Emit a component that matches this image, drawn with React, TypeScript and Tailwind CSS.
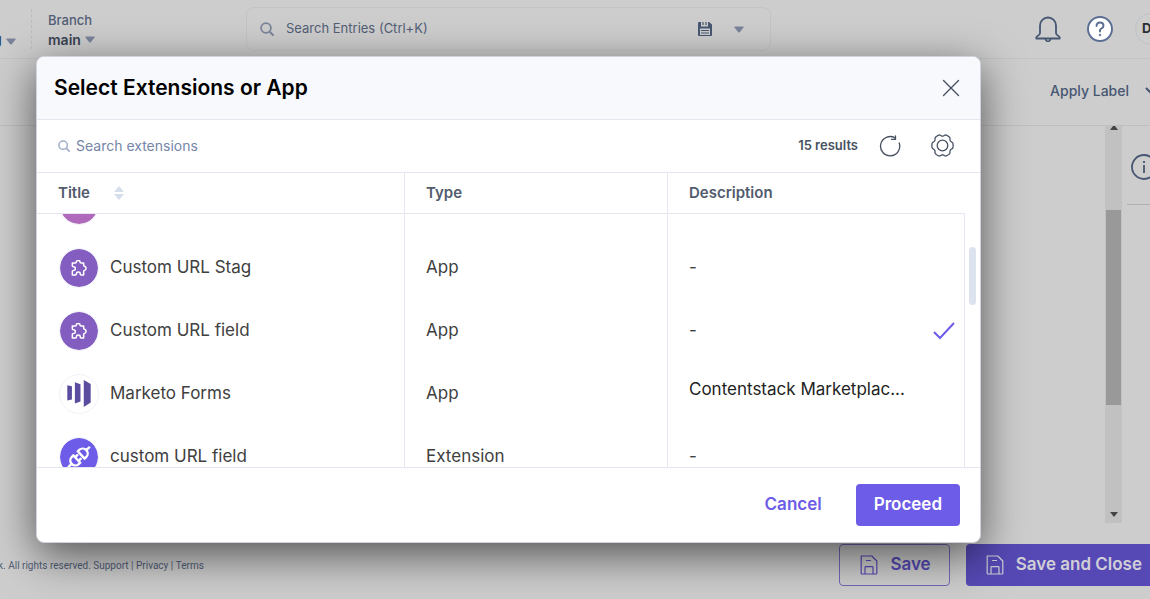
import { useLayoutEffect, useRef } from "react";
import type { ReactNode } from "react";

function Caret({ className = "" }: { className?: string }) {
  return (
    <svg viewBox="0 0 10 7" className={`h-[7px] w-[10px] shrink-0 ${className}`} aria-hidden="true">
      <path d="M1 .5h8q1 0 .5 .9L6 6Q5 7 4 6L.5 1.4Q0 .5 1 .5z" fill="currentColor" />
    </svg>
  );
}

function SearchIcon({ className = "" }: { className?: string }) {
  return (
    <svg viewBox="0 0 14 14" className={`shrink-0 ${className}`} fill="none" stroke="currentColor" aria-hidden="true">
      <circle cx="6" cy="6" r="4.9" strokeWidth="1.8" />
      <path d="M9.6 9.6 13 13" strokeWidth="2" strokeLinecap="round" />
    </svg>
  );
}

function FloppyIcon() {
  return (
    <svg viewBox="0 0 18 20" className="h-5 w-[18px] shrink-0" fill="none" stroke="currentColor" strokeWidth="1.2" strokeLinejoin="round" aria-hidden="true">
      <path d="M1.2 1h10.6l5 5v12.2q0 .8-.8.8H2q-.8 0-.8-.8z" />
      <path d="M5 19v-6.5q0-.8.8-.8h6.400q.8 0 .8.8V19" />
      <path d="M6.500 5.500h4" strokeLinecap="round" />
    </svg>
  );
}

function PuzzleIcon() {
  return (
    <svg viewBox="0 0 51 48" className="h-4 w-[17px]" fill="none" stroke="#fff" strokeWidth="4.500" strokeLinejoin="round" aria-hidden="true">
      <path d="M4 9h9q3 0 3-3.500a5.500 4 0 0 1 11 0Q27 9 30 9h8v7q0 3 4 3.500a5.500 6 0 0 1 0 11q-4 .5-4 3.500v11h-8q-2 0-2.500-4a5.500 5 0 0 0-11 0Q16 45 14 45H4V34q0-2 3.500-2.500a5.500 5.500 0 0 0 0-11Q4 20 4 17z" />
    </svg>
  );
}

function MarketoIcon() {
  return (
    <svg viewBox="0 0 71 82" className="h-[27px] w-6" fill="#5c4c9f" aria-hidden="true">
      <path d="M0 16l14 3v40l-14 3zM23 7l17 6v52l-17 6zM50 0l21 12v56L50 82z" />
    </svg>
  );
}

function PlugIcon() {
  return (
    <svg viewBox="-14 -14 28 28" className="h-7 w-7" fill="none" stroke="#fff" strokeWidth="2.400" strokeLinecap="round" strokeLinejoin="round" aria-hidden="true">
      <g transform="rotate(-43)">
        <path d="M-14 0h4M-3-5v10h-2a5 5 0 0 1 0-10zM-3-2.500h3M-3 2.500h3M3-5v10h2a5 5 0 0 0 0-10zM10 0h4" />
      </g>
    </svg>
  );
}

const gearOutline =
  Array.from({ length: 120 }, (_, i) => {
    const angle = (i / 120) * Math.PI * 2;
    const wave = Math.max(-1, Math.min(0.6, 0.5 + 1.5 * Math.cos(6 * angle)));
    const r = 10 + wave;
    return `${i ? "L" : "M"}${(r * Math.cos(angle)).toFixed(2)} ${(r * 1.04 * Math.sin(angle)).toFixed(2)}`;
  }).join("") + "z";

type Row = { title: string; type: string; description: string; icon: ReactNode; color: string; selected?: boolean; clamp?: boolean };

const rows: Row[] = [
  { title: "", type: "", description: "", icon: null, color: "bg-[#b06abb]" },
  { title: "Custom URL Stag", type: "App", description: "-", icon: <PuzzleIcon />, color: "bg-[#845dc1]" },
  { title: "Custom URL field", type: "App", description: "-", icon: <PuzzleIcon />, color: "bg-[#845dc1]", selected: true },
  { title: "Marketo Forms", type: "App", description: "Contentstack Marketplac...", icon: <MarketoIcon />, color: "bg-white", clamp: true },
  { title: "custom URL field", type: "Extension", description: "-", icon: <PlugIcon />, color: "bg-[#6c5ce7]" },
];

function TopBar() {
  return (
    <header className="flex h-[59px] shrink-0 items-center border-b border-[#c3c3c6]">
      <button className="-ml-[7px] flex h-10 w-[39px] items-end gap-1 border-r border-dashed border-[#bcbcc0] text-sm leading-5 font-semibold text-[#33475f]">
        g<Caret className="mb-1 text-[#7a849b]" />
      </button>
      <button className="ml-4 flex w-[198px] flex-col items-start pt-px text-left">
        <span className="text-[13px] leading-5 font-medium text-[#525e76]">Branch</span>
        <span className="flex items-center gap-1 text-sm leading-5 font-semibold text-[#3b4454]">
          main <Caret className="text-[#7a849b]" />
        </span>
      </button>
      <div className="flex h-[44px] w-[525px] items-center rounded-lg border border-[#c4c4c8] pr-[26px] pl-[13px]">
        <SearchIcon className="h-[14px] w-[14px] text-[#7a849b]" />
        <input
          aria-label="Search Entries"
          placeholder="Search Entries (Ctrl+K)"
          className="ml-3 min-w-0 flex-1 bg-transparent text-[13px] text-[#525e76] outline-none placeholder:text-[#525e76]"
        />
        <button aria-label="Saved searches" className="mr-[22px] text-[#475672]">
          <svg viewBox="0 0 14 14" className="h-[14px] w-[14px]" aria-hidden="true">
            <path fillRule="evenodd" fill="currentColor" d="M1 0h2v4.500h7V0h1l3 2.500V13q0 1-1 1H1q-1 0-1-1V1q0-1 1-1zM2 6.500V13h10V6.500z" />
            <path d="M5 0v3M8 0v3M3 8.500h8M3 11h8" stroke="currentColor" strokeWidth="1.200" />
          </svg>
        </button>
        <button aria-label="Search options" className="text-[#7a849b]"><Caret /></button>
      </div>
      <div className="-mr-[17px] ml-auto flex items-center">
        <button aria-label="Notifications" className="mr-[26px] text-[#475672]">
          <svg viewBox="0 0 26 26" className="h-[26px] w-[26px]" fill="none" stroke="currentColor" strokeWidth="1.800" strokeLinejoin="round" aria-hidden="true">
            <path d="M5 17V9.500a8 8 0 0 1 16 0V17q0 1.800 2.500 3 1.500.8 1.300 2.500H1.200Q1 20.800 2.500 20 5 18.800 5 17z" />
            <path d="M10.500 23q.3 2.300 2.500 2.300t2.500-2.300" />
          </svg>
        </button>
        <button aria-label="Help" className="mr-[22px]">
          <svg viewBox="0 0 26 26" className="h-[26px] w-[26px]" fill="none" stroke="#5a6d92" strokeWidth="1.900" aria-hidden="true">
            <circle cx="13" cy="13" r="12" fill="#fff" />
            <path d="M9.500 10Q9.500 6.500 13 6.500T16.500 9.800Q16.500 11.500 14.500 12.500T13 15.500" strokeLinecap="round" />
            <circle cx="13" cy="19" r=".8" fill="#5a6d92" strokeWidth="1" />
          </svg>
        </button>
        <button className="h-8 w-8 rounded-full border border-[#c1c1c6] pl-[6px] text-left text-[13px] font-bold text-[#2c2e33]">D</button>
      </div>
    </header>
  );
}

function PageBackground() {
  return (
    <div className="flex min-h-screen flex-col">
      <TopBar />
      <div className="-mr-[7px] flex h-[67px] shrink-0 items-center justify-end border-b border-[#bfbfc1] pb-[2px]">
        <button className="flex items-center gap-4 text-sm font-medium text-[#475672]">
          Apply Label
          <svg viewBox="0 0 12 8" className="h-2 w-3" fill="none" stroke="currentColor" strokeWidth="2" aria-hidden="true"><path d="M1 1l5 5 5-5" /></svg>
        </button>
      </div>
      <main className="flex h-[397px] shrink-0 justify-end">
        <div className="flex w-[17px] flex-col items-center bg-[#c1c1c1]" aria-hidden="true">
          <svg viewBox="0 0 8 4" className="h-1 w-2"><path d="M0 4l3-4h2l3 4z" fill="#444" /></svg>
          <div className="mt-20 h-[195px] w-[15px] bg-[#999]" />
          <svg viewBox="0 0 8 5" className="mt-auto mb-[6px] h-[5px] w-2"><path d="M0 0h8L4 5z" fill="#444" /></svg>
        </div>
        <aside className="ml-[5px] h-[79px] w-[23px] border-b border-[#b0b0b0]">
          <button aria-label="Information" className="mt-7 ml-1 text-[#475672]">
            <svg viewBox="0 0 26 26" className="h-[26px] w-[26px]" fill="none" stroke="currentColor" strokeWidth="1.800" aria-hidden="true">
              <circle cx="13" cy="13" r="12" />
              <path d="M13 11v8M13 7v2" />
            </svg>
          </button>
        </aside>
      </main>
      <footer className="-mr-3 flex flex-1 items-start pt-[21px]">
        <p className="-ml-[2px] flex h-[42px] items-center font-['Roboto',sans-serif] text-[10px] whitespace-pre text-[#525e76]">
          k. All rights reserved. <a href="#support">Support</a> | <a href="#privacy">Privacy</a> | <a href="#terms">Terms</a>
        </p>
        <button className="ml-auto flex h-[42px] items-center gap-3 rounded border border-[#7468b8] px-[18px] pl-5 text-[17px] font-semibold text-[#5649b5]">
          <FloppyIcon />Save
        </button>
        <button className="ml-4 flex h-[42px] items-center gap-3 rounded bg-[#5649b5] px-5 text-[17px] font-semibold text-[#d0cfd8]">
          <FloppyIcon />Save and Close
        </button>
      </footer>
    </div>
  );
}

function ExtensionTable() {
  const scroller = useRef<HTMLDivElement>(null);
  useLayoutEffect(() => {
    if (scroller.current) scroller.current.scrollTop = 41;
  }, []);
  const headCell = "sticky top-0 z-10 h-[41px] border-b border-[#e4e6f0] bg-white p-0 text-left text-[15px] font-semibold text-[#525b6e]";
  return (
    <div className="flex h-[296px] border-y border-[#e4e6f0]">
      <div ref={scroller} className="min-w-0 flex-1 overflow-y-auto [scrollbar-width:none]">
        <table className="w-full table-fixed border-separate border-spacing-0">
          <thead>
            <tr>
              <th scope="col" className={`${headCell} w-[367px]`}>
                <button className="flex items-center gap-6 pl-[21px]">
                  Title
                  <svg viewBox="0 0 10 14" className="h-[14px] w-[10px]" fill="#d7deeb" aria-hidden="true"><path d="M5 0l5 6H0zM5 14l5-6H0z" /></svg>
                </button>
              </th>
              <th scope="col" className={`${headCell} w-[263px] border-l`}><span className="pl-[21px]">Type</span></th>
              <th scope="col" className={`${headCell} border-l`}><span className="pl-[21px]">Description</span></th>
            </tr>
          </thead>
          <tbody className="text-[17px] text-[#404040]">
            {rows.map((row, i) => (
              <tr key={i}>
                <td className="h-[63px] p-0">
                  <div className="flex items-center gap-[11px] pl-[22px]">
                    <span className={`flex h-10 w-10 shrink-0 items-center justify-center rounded-full border border-[#f1f2fa] bg-clip-padding ${row.color}`}>{row.icon}</span>
                    {row.title}
                  </div>
                </td>
                <td className="border-l border-[#e4e6f0] p-0 pl-[21px]">{row.type}</td>
                <td className="border-x border-[#e4e6f0] p-0 pr-2 pl-[21px]">
                  <div className={row.clamp ? "pb-2 text-[#222]" : "flex items-center justify-between"}>
                    {row.description}
                    {row.selected && (
                      <svg viewBox="0 0 24 18" className="h-[18px] w-6" fill="none" stroke="#6c5ce7" strokeWidth="2" aria-label="Selected" role="img"><path d="M2 10l6 6L22 1" /></svg>
                    )}
                  </div>
                </td>
              </tr>
            ))}
          </tbody>
        </table>
      </div>
      <div className="w-[15px] shrink-0 pt-[74px] pl-1" aria-hidden="true">
        <div className="h-[58px] w-[7px] rounded-full bg-[#dde3ee]" />
      </div>
    </div>
  );
}

function SelectDialog() {
  return (
    <section role="dialog" aria-labelledby="dialog-title" className="w-full overflow-hidden rounded-lg border border-[#d0d3dd] bg-white shadow-[0_12px_44px_rgba(0,0,0,0.6)]">
      <div className="flex h-[63px] items-center justify-between border-b border-[#e4e6f0] bg-[#f7f9fd] pr-5 pb-px pl-[17px]">
        <h1 id="dialog-title" className="text-[21px] font-semibold text-black">Select Extensions or App</h1>
        <button aria-label="Close" className="text-[#475161]">
          <svg viewBox="0 0 18 18" className="h-[18px] w-[18px]" fill="none" stroke="currentColor" strokeWidth="1.400" strokeLinecap="round" aria-hidden="true"><path d="M1.500 1.500l15 15M16.500 1.500l-15 15" /></svg>
        </button>
      </div>
      <div className="flex h-[52px] items-center pr-[26px] pb-px pl-[21px]">
        <SearchIcon className="h-3 w-3 text-[#a3b0cb]" />
        <input
          aria-label="Search extensions"
          placeholder="Search extensions"
          className="ml-[6px] min-w-0 flex-1 bg-transparent text-sm outline-none placeholder:text-[#7586a8]"
        />
        <span className="mr-[21px] text-[13px] font-semibold text-[#475161]">15 results</span>
        <button aria-label="Refresh" className="mr-[30px] text-[#475161]">
          <svg viewBox="0 0 22 22" className="h-[22px] w-[22px]" fill="none" stroke="currentColor" strokeWidth="1.300" strokeLinecap="round" strokeLinejoin="round" aria-hidden="true">
            <path d="M20.200 8A9.600 9.600 0 1 1 16 2.900M16.500.8v3.600h-4" />
          </svg>
        </button>
        <button aria-label="Table settings" className="text-[#475161]">
          <svg viewBox="-11.500 -11.500 23 23" className="h-[23px] w-[23px]" fill="none" stroke="currentColor" strokeWidth="1.300" strokeLinejoin="round" aria-hidden="true">
            <path d={gearOutline} />
            <circle r="5.300" />
          </svg>
        </button>
      </div>
      <ExtensionTable />
      <div className="flex h-[74px] items-center justify-end gap-[34px] pr-5">
        <button className="text-[17px] font-semibold text-[#6c5ce7]">Cancel</button>
        <button className="h-[42px] rounded bg-[#6c5ce7] px-[18px] text-[17px] font-semibold text-white">Proceed</button>
      </div>
    </section>
  );
}

export default function App() {
  return (
    <div className="relative min-h-screen overflow-hidden bg-[#cdcdcd] font-['Inter',sans-serif]">
      <PageBackground />
      <div className="absolute inset-0 flex items-start pt-14 pr-[169px] pl-9">
        <SelectDialog />
      </div>
    </div>
  );
}
